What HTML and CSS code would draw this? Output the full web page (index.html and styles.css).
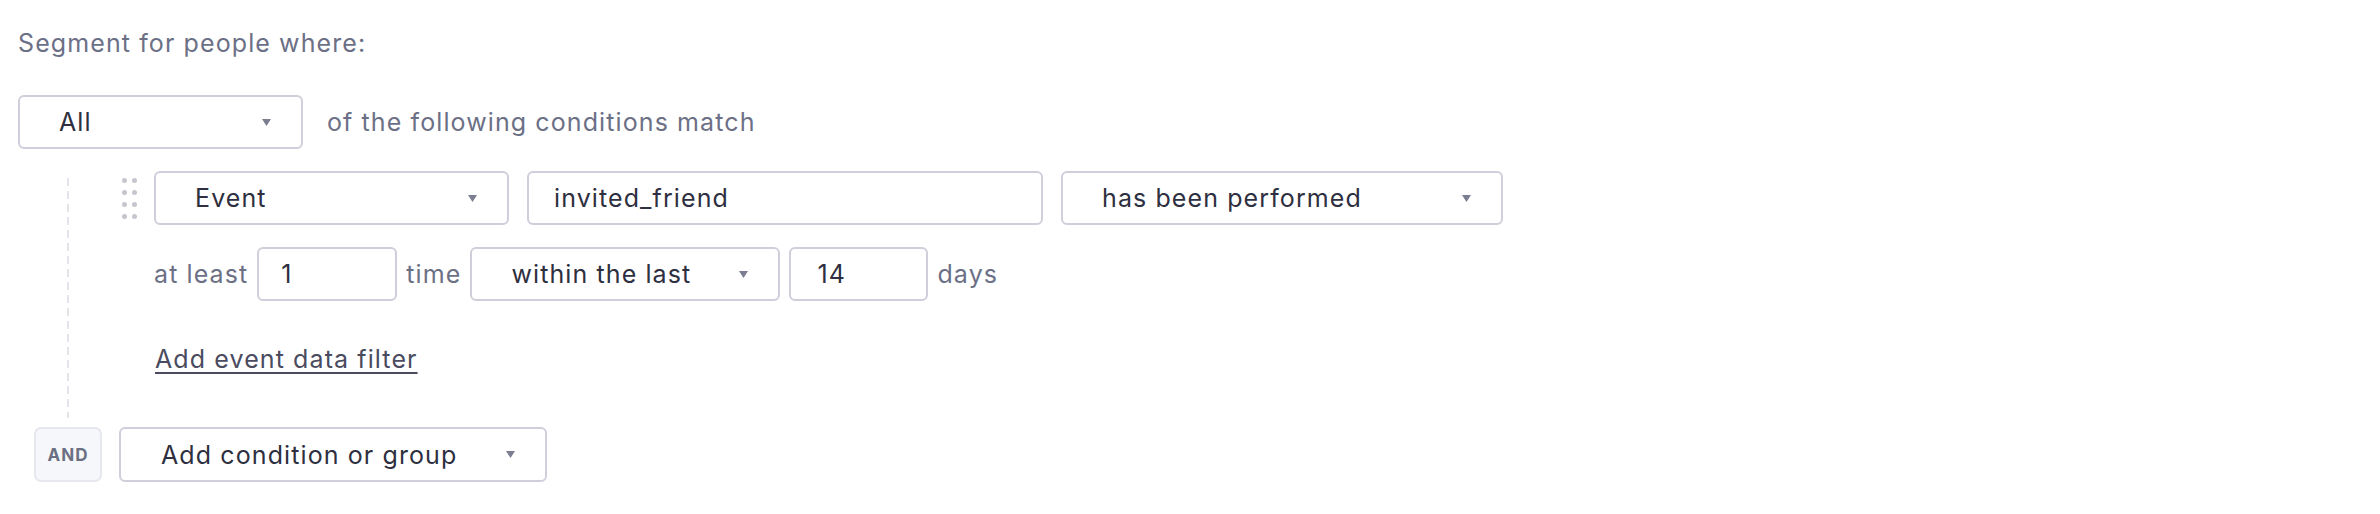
FILE: index.html
```html
<!DOCTYPE html>
<html lang="en">
<head>
<meta charset="utf-8">
<title>Segment</title>
<link rel="stylesheet" href="styles.css">
</head>
<body>
<div class="builder">
  <div class="title">Segment for people where:</div>

  <div class="row match-row">
    <div class="select select-all">
      <span class="value">All</span>
      <svg class="caret" width="9" height="7" viewBox="0 0 9 7"><polygon points="0,0 9,0 4.5,7" /></svg>
    </div>
    <span class="label label-match">of the following conditions match</span>
  </div>

  <div class="group">
    <div class="row cond-row">
      <div class="handle">
        <i></i><i></i><i></i><i></i><i></i><i></i><i></i><i></i>
      </div>
      <div class="select select-event">
        <span class="value">Event</span>
        <svg class="caret" width="9" height="7" viewBox="0 0 9 7"><polygon points="0,0 9,0 4.5,7" /></svg>
      </div>
      <div class="input input-name"><span class="value">invited_friend</span></div>
      <div class="select select-performed">
        <span class="value">has been performed</span>
        <svg class="caret" width="9" height="7" viewBox="0 0 9 7"><polygon points="0,0 9,0 4.5,7" /></svg>
      </div>
    </div>

    <div class="row freq-row">
      <span class="label">at least</span>
      <div class="input input-count"><span class="value">1</span></div>
      <span class="label">time</span>
      <div class="select select-within">
        <span class="value">within the last</span>
        <svg class="caret" width="9" height="7" viewBox="0 0 9 7"><polygon points="0,0 9,0 4.5,7" /></svg>
      </div>
      <div class="input input-days"><span class="value">14</span></div>
      <span class="label">days</span>
    </div>

    <div class="link-row">
      <a class="link" href="#">Add event data filter</a>
    </div>
  </div>

  <div class="row and-row">
    <div class="and-badge">AND</div>
    <div class="select select-add">
      <span class="value">Add condition or group</span>
      <svg class="caret" width="9" height="7" viewBox="0 0 9 7"><polygon points="0,0 9,0 4.5,7" /></svg>
    </div>
  </div>
</div>
</body>
</html>
```

FILE: styles.css
```css
* {
  box-sizing: border-box;
}

html, body {
  margin: 0;
  padding: 0;
  background: #ffffff;
}

body {
  font-family: "Inter", "Noto Sans", "Liberation Sans", sans-serif;
  font-size: 25px;
  letter-spacing: 1.1px;
  color: #2e2f40;
}

.builder {
  padding-left: 18px;
}

.title {
  margin-top: 25px;
  line-height: 36px;
  color: #6c7086;
}

.row {
  display: flex;
  align-items: center;
}

.label {
  color: #6c7086;
  line-height: 36px;
  white-space: nowrap;
}

.select,
.input {
  display: flex;
  align-items: center;
  height: 54px;
  border: 2px solid #cfcfdb;
  border-radius: 6px;
  background: #ffffff;
  color: #2e2f40;
  white-space: nowrap;
}

.select {
  justify-content: space-between;
  padding: 0 30px 0 39px;
}

.input {
  padding: 0 22px;
}

.caret {
  display: block;
  flex: none;
}

.caret polygon {
  fill: #7b7e90;
}

/* row 1 */
.match-row {
  margin-top: 34px;
}

.select-all {
  width: 285px;
}

.label-match {
  margin-left: 24px;
}

/* group with dashed guide */
.group {
  margin-left: 49px;
  margin-top: 22px;
  padding-bottom: 41px;
  background-image: repeating-linear-gradient(to bottom, #e4e5eb 0, #e4e5eb 8px, transparent 8px, transparent 13px);
  background-size: 2px calc(100% - 7px);
  background-position: 0 7px;
  background-repeat: no-repeat;
}

.cond-row {
  padding-left: 55px;
  gap: 18px;
}

.handle {
  display: grid;
  grid-template-columns: 5px 5px;
  column-gap: 5px;
  row-gap: 7px;
  margin-right: -1px;
}

.handle i {
  display: block;
  width: 5px;
  height: 5px;
  border-radius: 50%;
  background: #c5c6ce;
}

.select-event {
  width: 355px;
}

.input-name {
  width: 516px;
  padding-left: 25px;
}

.select-performed {
  width: 442px;
}

.freq-row {
  margin-top: 22px;
  padding-left: 87px;
  gap: 9px;
}

.input-count {
  width: 140px;
}

.select-within {
  width: 310px;
}

.input-days {
  width: 139px;
  padding-left: 26px;
}

.link-row {
  margin-top: 40px;
  padding-left: 88px;
  line-height: 36px;
}

.link {
  color: #4a4b5f;
  text-decoration: underline;
  text-decoration-thickness: 2px;
  text-underline-offset: 4px;
}

/* AND row */
.and-row {
  margin-top: 9px;
  padding-left: 16px;
  gap: 17px;
}

.and-badge {
  display: flex;
  align-items: center;
  justify-content: center;
  width: 68px;
  height: 55px;
  border: 2px solid #e7e8ee;
  border-radius: 7px;
  background: #f6f7fa;
  color: #6b6f82;
  font-size: 17px;
  font-weight: 700;
  letter-spacing: 1px;
}

.select-add {
  width: 428px;
  height: 55px;
  padding-left: 40px;
}
```
